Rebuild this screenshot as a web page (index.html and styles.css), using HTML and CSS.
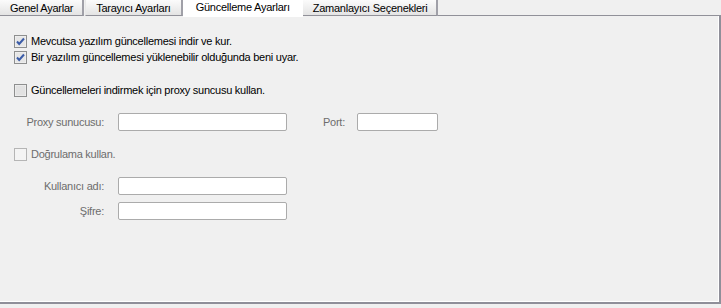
FILE: index.html
```html
<!DOCTYPE html>
<html lang="tr">
<head>
    <meta charset="UTF-8">
    <title>Güncelleme Ayarları</title>
    <link rel="stylesheet" href="styles.css">
</head>
<body>
    <div class="tabs">
        <div class="tab">Genel Ayarlar</div>
        <div class="tab tab-second">Tarayıcı Ayarları</div>
        <div class="tab tab-active">Güncelleme Ayarları</div>
        <div class="tab">Zamanlayıcı Seçenekleri</div>
        <div class="tabs-fill"></div>
    </div>

    <div class="panel">
        <label class="check">
            <svg class="box" width="13" height="13" viewBox="0 0 13 13">
                <rect x="0.5" y="0.5" width="12" height="12" fill="#f4f4f4" stroke="#8e8f8f"/>
                <rect x="1.5" y="1.5" width="10" height="10" fill="#e6e6e6"/>
                <path d="M3 6.5 L5.2 9 L10 3.5" fill="none" stroke="#3b5ca8" stroke-width="2"/>
            </svg>
            <span>Mevcutsa yazılım güncellemesi indir ve kur.</span>
        </label>
        <label class="check">
            <svg class="box" width="13" height="13" viewBox="0 0 13 13">
                <rect x="0.5" y="0.5" width="12" height="12" fill="#f4f4f4" stroke="#8e8f8f"/>
                <rect x="1.5" y="1.5" width="10" height="10" fill="#e6e6e6"/>
                <path d="M3 6.5 L5.2 9 L10 3.5" fill="none" stroke="#3b5ca8" stroke-width="2"/>
            </svg>
            <span>Bir yazılım güncellemesi yüklenebilir olduğunda beni uyar.</span>
        </label>

        <label class="check row-proxy">
            <svg class="box" width="13" height="13" viewBox="0 0 13 13">
                <rect x="0.5" y="0.5" width="12" height="12" fill="#f4f4f4" stroke="#8e8f8f"/>
                <rect x="1.5" y="1.5" width="10" height="10" fill="#e2e2e2"/>
            </svg>
            <span>Güncellemeleri indirmek için proxy suncusu kullan.</span>
        </label>

        <div class="field row-server">
            <span class="field-label">Proxy sunucusu:</span>
            <div class="input input-wide"></div>
            <span class="port-label">Port:</span>
            <div class="input input-port"></div>
        </div>

        <label class="check check-disabled row-auth">
            <svg class="box" width="13" height="13" viewBox="0 0 13 13">
                <rect x="0.5" y="0.5" width="12" height="12" fill="#f4f4f4" stroke="#b5b5b5"/>
            </svg>
            <span>Doğrulama kullan.</span>
        </label>

        <div class="field row-user">
            <span class="field-label">Kullanıcı adı:</span>
            <div class="input input-wide"></div>
        </div>
        <div class="field row-pass">
            <span class="field-label">Şifre:</span>
            <div class="input input-wide"></div>
        </div>
    </div>
</body>
</html>
```

FILE: styles.css
```css
* {
    margin: 0;
    padding: 0;
    box-sizing: border-box;
}

body {
    font-family: 'Liberation Sans', Arial, sans-serif;
    font-size: 11px;
    letter-spacing: -0.25px;
    background: #f0f0f0;
    color: #000000;
    width: 721px;
    height: 308px;
    overflow: hidden;
}

/* Tab strip */
.tabs {
    display: flex;
    height: 16px;
    align-items: flex-start;
}

.tab {
    height: 16px;
    padding: 1px 9px 0 10px;
    line-height: 14px;
    background: linear-gradient(#fbfbfb, #e4e4e4);
    border-right: 2px solid #a0a0a8;
    border-bottom: 1px solid #919199;
    white-space: nowrap;
}

.tab-second {
    margin-left: 1px;
    border-left: 1px solid #e8e8e8;
    padding: 1px 10px 0 10px;
}

.tab-active {
    background: #ffffff;
    border-right: none;
    border-bottom: none;
    height: 17px;
    padding: 0 13px 0 13px;
    position: relative;
    z-index: 1;
}

.tabs-fill {
    flex: 1;
    height: 16px;
    border-bottom: 1px solid #919199;
}

/* Panel */
.panel {
    height: 288px;
    border-right: 2px solid #8f8f99;
    border-bottom: 2px solid #8f8f99;
    box-shadow: inset -1px -1px 0 #ffffff;
    padding: 17px 0 0 14px;
}

.check {
    display: flex;
    align-items: center;
    gap: 4px;
    height: 16px;
}

.check .box {
    flex: none;
}

.row-proxy {
    margin-top: 17px;
}

.check-disabled span {
    color: #6d6d6d;
}

.field {
    display: flex;
    align-items: center;
    height: 18px;
    color: #6d6d6d;
}

.field-label {
    width: 90px;
    text-align: right;
    margin-right: 14px;
}

.input {
    height: 18px;
    background: #ffffff;
    border: 1px solid #ababab;
    border-radius: 2px;
}

.input-wide {
    width: 169px;
}

.input-port {
    width: 81px;
}

.port-label {
    margin-left: 36px;
    margin-right: 12px;
}

.row-server {
    margin-top: 15px;
}

.row-auth {
    margin-top: 15px;
}

.row-user {
    margin-top: 15px;
}

.row-pass {
    margin-top: 7px;
}
```
